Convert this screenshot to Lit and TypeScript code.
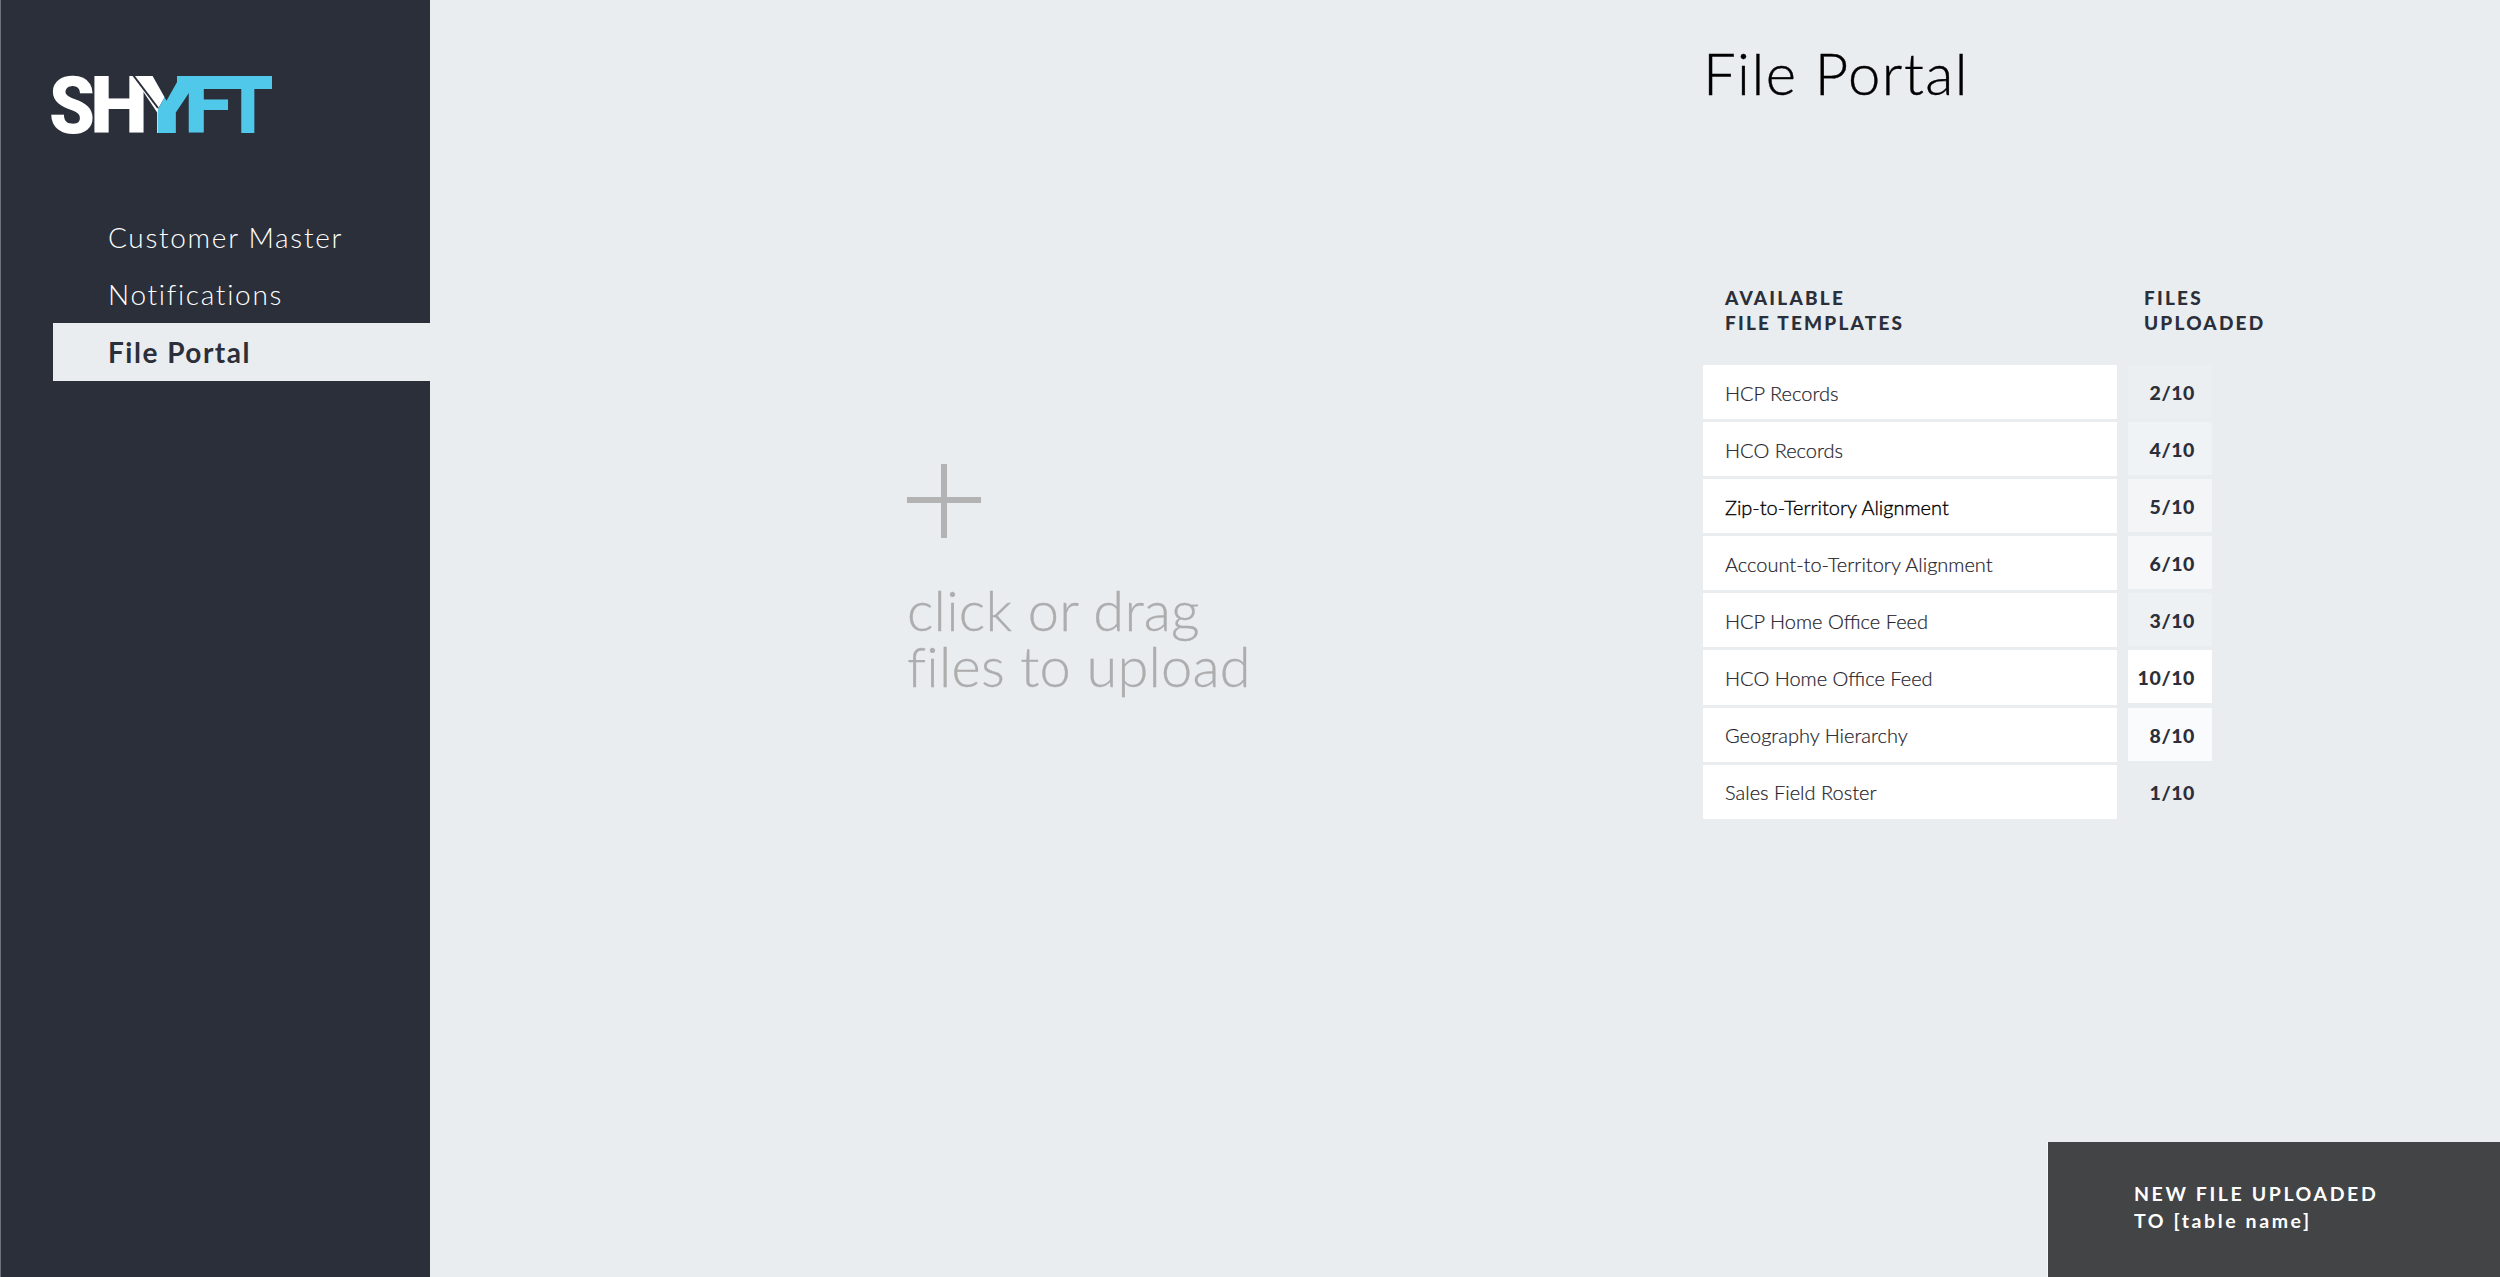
import { LitElement, html, css } from "lit";
import { customElement } from "lit/decorators.js";
import { styleMap } from "lit/directives/style-map.js";

const ROWS: [string, number, boolean?][] = [
  ["HCP Records", 2],
  ["HCO Records", 4],
  ["Zip-to-Territory Alignment", 5, true],
  ["Account-to-Territory Alignment", 6],
  ["HCP Home Office Feed", 3],
  ["HCO Home Office Feed", 10],
  ["Geography Hierarchy", 8],
  ["Sales Field Roster", 1],
];

@customElement("app-root")
export class AppRoot extends LitElement {
  static styles = css`
    :host {
      display: block;
      height: 100vh;
      font-family: Lato, "Open Sans", sans-serif;
      color: #2b2f3a;
    }
    .app { display: flex; height: 1277px; overflow: hidden; position: relative; background: #e9edf0; }
    .side {
      width: 430px;
      flex: none;
      background: #2b2f3a;
      box-shadow: inset 1px 0 0 #6f727a;
      display: flex;
      flex-direction: column;
      padding-top: 75px;
      box-sizing: border-box;
    }
    .logo { display: block; margin-left: 50px; width: 224px; height: 60px; }
    .logo text { font-family: Roboto, sans-serif; font-weight: 900; font-size: 80px; }
    .nav { display: flex; flex-direction: column; margin: 73px 0 0 53px; }
    .nav a {
      height: 57.4px;
      display: flex;
      align-items: center;
      padding-left: 55px;
      font-size: 28px;
      font-weight: 300;
      letter-spacing: 1.7px;
      color: #fff;
    }
    .nav a.on { height: 58px; background: #e9edf0; color: #2b2f3a; font-weight: 700; letter-spacing: 1.5px; }
    .main { flex: 1; display: flex; }
    .drop { width: 1273px; flex: none; padding: 464px 0 0 477px; box-sizing: border-box; color: #adadad; }
    .plus { display: block; width: 74px; height: 74px; }
    .drop p { margin: 44px 0 0 0; font-size: 56px; line-height: 56px; font-weight: 300; letter-spacing: 0.2px; -webkit-text-stroke: 0.3px #adadad; }
    .panel { flex: 1; display: flex; flex-direction: column; }
    h1 { margin: 38px 0 0 0; font-size: 58px; line-height: 70px; font-weight: 300; color: #000; letter-spacing: 1.5px; -webkit-text-stroke: 0.4px #000; }
    .heads {
      margin: 177px 0 0 0;
      display: grid;
      grid-template-columns: 419px auto;
      padding-left: 22px;
      font-size: 19px;
      line-height: 25px;
      font-weight: 900;
      letter-spacing: 2.2px;
    }
    .rows { margin-top: 30px; display: flex; flex-direction: column; gap: 3px; width: 509px; }
    .row { display: grid; grid-template-columns: 414px 84px; column-gap: 11px; height: 54.1px; }
    .name {
      background: #fff;
      display: flex;
      align-items: center;
      padding: 1px 0 0 22px;
      box-sizing: border-box;
      font-size: 20px;
      font-weight: 300;
      color: #1f222b;
      -webkit-text-stroke: 0.2px #1f222b;
    }
    .name.dark { color: #000; -webkit-text-stroke: 0.35px #000; }
    .count {
      height: 53px;
      box-sizing: border-box;
      display: flex;
      align-items: center;
      justify-content: flex-end;
      padding: 2px 17px 0 0;
      font-size: 19.5px;
      font-weight: 900;
      letter-spacing: 0.6px;
    }
    .toast {
      position: absolute;
      left: 2048px;
      top: 1142px;
      right: 0;
      bottom: 0;
      background: #434446;
      box-shadow: -1px 0 0 #f6f7f8;
      color: #fff;
      padding: 38px 0 0 86px;
      font-size: 19.5px;
      line-height: 27px;
      font-weight: 700;
      letter-spacing: 2.6px;
    }
  `;

  private logo() {
    return html`<svg class="logo" viewBox="0 0 224 60" role="img" aria-label="SHYFT">
      <defs>
        <clipPath id="yl"><polygon points="70,0 127,0 108,34 108,60 70,60"></polygon></clipPath>
        <clipPath id="yr"><polygon points="127,0 160,0 160,60 108,60 108,34"></polygon></clipPath>
      </defs>
      <text x="-1" y="58" fill="#fff" textLength="46" lengthAdjust="spacingAndGlyphs">S</text>
      <text x="40" y="58" fill="#fff" textLength="58" lengthAdjust="spacingAndGlyphs">H</text>
      <text x="83" y="58" fill="#fff" clip-path="url(#yl)" textLength="67" lengthAdjust="spacingAndGlyphs">Y</text>
      <line x1="83" y1="0" x2="108" y2="33" stroke="#2b2f3a" stroke-width="2"></line>
      <text x="83" y="58" fill="#4fc8ea" clip-path="url(#yr)" textLength="67" lengthAdjust="spacingAndGlyphs">Y</text>
      <rect x="127" y="1" width="95" height="13" fill="#4fc8ea"></rect>
      <text x="134" y="58" fill="#4fc8ea" textLength="48" lengthAdjust="spacingAndGlyphs">F</text>
      <text x="174" y="58" fill="#4fc8ea" textLength="48" lengthAdjust="spacingAndGlyphs">T</text>
    </svg>`;
  }

  render() {
    return html`<div class="app">
      <aside class="side">
        ${this.logo()}
        <nav class="nav">
          <a>Customer Master</a>
          <a>Notifications</a>
          <a class="on">File Portal</a>
        </nav>
      </aside>
      <main class="main">
        <section class="drop">
          <svg class="plus" viewBox="0 0 74 74">
            <rect x="34" y="0" width="6" height="74" fill="#b3b3b3"></rect>
            <rect x="0" y="33" width="74" height="6" fill="#b3b3b3"></rect>
          </svg>
          <p>click or drag<br />files to upload</p>
        </section>
        <section class="panel">
          <h1>File Portal</h1>
          <div class="heads">
            <div>AVAILABLE<br />FILE TEMPLATES</div>
            <div>FILES<br />UPLOADED</div>
          </div>
          <div class="rows">
            ${ROWS.map(
              ([name, n, dark]) => html`<div class="row">
                <div class="name ${dark ? "dark" : ""}">${name}</div>
                <div class="count" style=${styleMap({ background: `rgba(255,255,255,${(n - 1) / 9})` })}>${n}/10</div>
              </div>`
            )}
          </div>
        </section>
      </main>
      <div class="toast">NEW FILE UPLOADED<br />TO [table name]</div>
    </div>`;
  }
}
